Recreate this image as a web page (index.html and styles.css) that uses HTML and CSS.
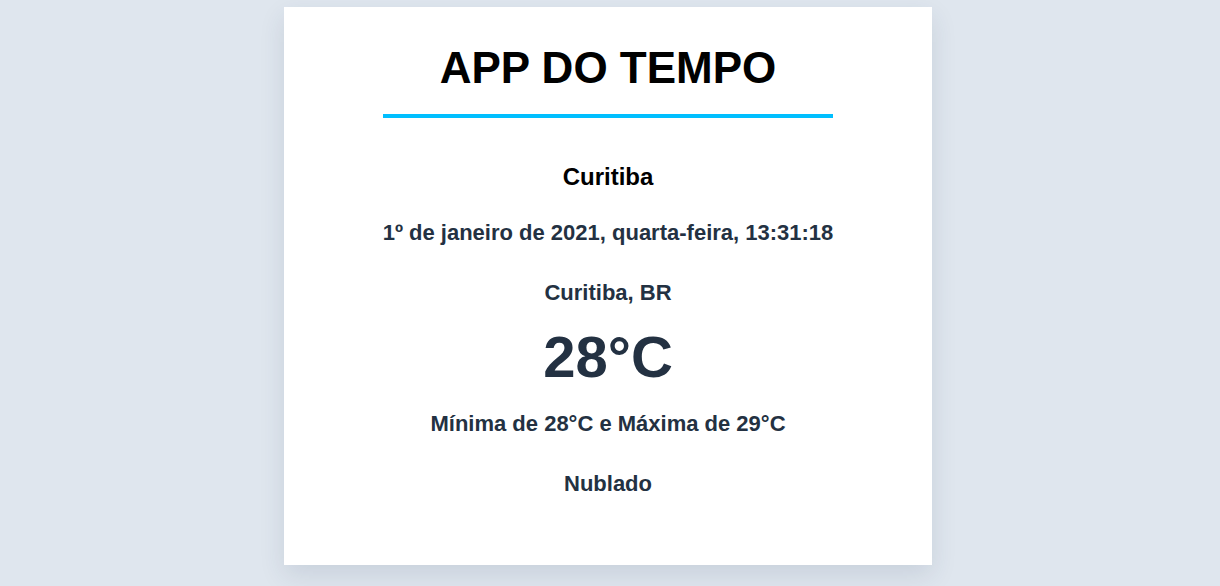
FILE: index.html
```html
<!DOCTYPE html>
<html lang="pt-BR">
<head>
<meta charset="utf-8">
<title>App do Tempo</title>
<link rel="stylesheet" href="styles.css">
</head>
<body>
<main class="card">
  <h1 class="title">APP DO TEMPO</h1>
  <hr class="divider">
  <h2 class="city">Curitiba</h2>
  <p class="date">1º de janeiro de 2021, quarta-feira, 13:31:18</p>
  <p class="place">Curitiba, BR</p>
  <p class="temp">28°C</p>
  <p class="range">Mínima de 28°C e Máxima de 29°C</p>
  <p class="desc">Nublado</p>
</main>
</body>
</html>
```
FILE: styles.css
```css
html, body {
  margin: 0;
  padding: 0;
}
body {
  background: #dfe6ee;
  font-family: "Liberation Sans", Arial, sans-serif;
  display: flex;
  justify-content: center;
  padding: 7px 4px 0 0;
  min-height: 586px;
  box-sizing: border-box;
  overflow: hidden;
}
.card {
  width: 648px;
  height: 558px;
  box-sizing: border-box;
  background: #ffffff;
  box-shadow: 0 10px 24px rgba(40, 60, 90, 0.12);
  padding: 36px 0 0;
  display: flex;
  flex-direction: column;
  align-items: center;
  text-align: center;
}
.title {
  margin: 0;
  font-size: 44px;
  line-height: 50px;
  font-weight: 700;
  color: #000;
}
.divider {
  width: 450px;
  height: 4px;
  border: 0;
  margin: 21px 0 0;
  background: #00bfff;
}
.city {
  margin: 45px 0 0;
  font-size: 24px;
  line-height: 28px;
  font-weight: 700;
  color: #000;
}
.date, .place, .range, .desc {
  font-size: 22px;
  line-height: 26px;
  font-weight: 700;
  color: #233142;
}
.date { margin: 29px 0 0; }
.place { margin: 34px 0 0; }
.temp {
  margin: 18px 0 0;
  font-size: 58px;
  line-height: 66px;
  font-weight: 700;
  color: #233142;
}
.range { margin: 21px 0 0; }
.desc { margin: 34px 0 0; }
```
